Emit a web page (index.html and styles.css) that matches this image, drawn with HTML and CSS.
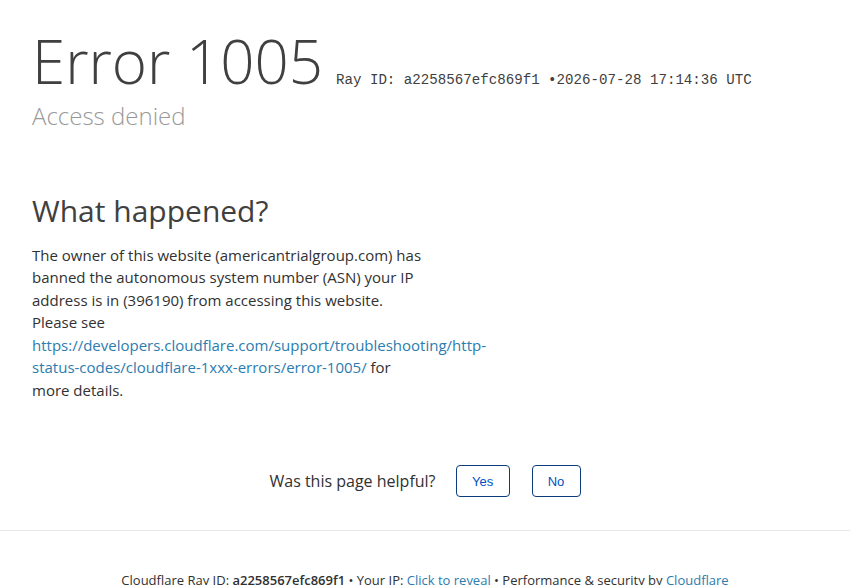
FILE: index.html
```html
<!DOCTYPE html>
<html lang="en">
<head>
<meta charset="utf-8">
<title>Access denied | americantrialgroup.com used Cloudflare to restrict access</title>
<link rel="stylesheet" href="styles.css">
</head>
<body>
<div class="wrapper">
  <header class="header">
    <h1 class="title-row">
      <span class="code">Error 1005</span>
      <span class="ray">Ray ID: a2258567efc869f1 &bull;2026-07-28 17:14:36 UTC</span>
    </h1>
    <h2 class="subtitle">Access denied</h2>
  </header>

  <section class="section">
    <h2 class="section-title">What happened?</h2>
    <p class="text">The owner of this website (americantrialgroup.com) has banned the autonomous system number (ASN) your IP address is in (396190) from accessing this website.<br>Please see <a class="link" href="#">https://developers.cloudflare.com/support/troubleshooting/http-status-codes/cloudflare-1xxx-errors/error-1005/</a> for more details.</p>
  </section>

  <div class="feedback">
    <span class="feedback-q">Was this page helpful?</span>
    <button class="fb-btn fb-yes" type="button">Yes</button>
    <button class="fb-btn fb-no" type="button">No</button>
  </div>

  <footer class="footer">
    <p class="footer-text">Cloudflare Ray ID: <strong class="ray-strong">a2258567efc869f1</strong> &bull; Your IP: <a class="link" href="#">Click to reveal</a> &bull; Performance &amp; security by <a class="link" href="#">Cloudflare</a></p>
  </footer>
</div>
</body>
</html>
```
FILE: styles.css
```css
* { box-sizing: border-box; }
html, body { margin: 0; padding: 0; background: #fff; }
body {
  font-family: "Open Sans", "Noto Sans", sans-serif;
  color: #313131;
  font-size: 15px;
  line-height: 1.5;
}
.wrapper { width: 850px; }
.header { padding: 25px 32px 0 32px; }
.title-row {
  margin: 0;
  display: flex;
  align-items: baseline;
  gap: 13px;
  font-weight: 300;
}
.code {
  font-size: 60px;
  line-height: 1.2;
  font-weight: 300;
  color: #404040;
}
.ray {
  font-family: "Liberation Mono", "DejaVu Sans Mono", monospace;
  font-size: 14.15px;
  font-weight: 400;
  color: #404040;
}
.subtitle {
  margin: 3px 0 0 0;
  font-size: 24px;
  font-weight: 300;
  line-height: 1.3;
  color: #999;
}
.section { padding: 61px 32px 0 32px; width: 500px; }
.section-title {
  margin: 0 0 14px 0;
  font-size: 30px;
  font-weight: 400;
  line-height: 1.25;
  color: #404040;
}
.text { margin: 0; width: 400px; }
.link { color: #2c7cb0; text-decoration: none; }
.feedback {
  margin-top: 64px;
  display: flex;
  justify-content: center;
  align-items: center;
}
.feedback-q { font-size: 16px; color: #313131; margin-right: 20px; }
.fb-btn {
  font-family: "Liberation Sans", Arial, sans-serif;
  font-size: 13px;
  color: #0051c3;
  background: #fff;
  border: 1px solid #0a3d7a;
  border-radius: 4px;
  height: 32px;
  padding: 0;
  cursor: pointer;
}
.fb-yes { width: 54px; }
.fb-no { width: 49px; margin-left: 22px; }
.footer {
  margin-top: 33px;
  border-top: 1px solid #e8e8e8;
  padding-top: 40px;
  text-align: center;
}
.footer-text { margin: 0; font-size: 13px; color: #313131; }
.ray-strong { font-weight: 600; }
```
